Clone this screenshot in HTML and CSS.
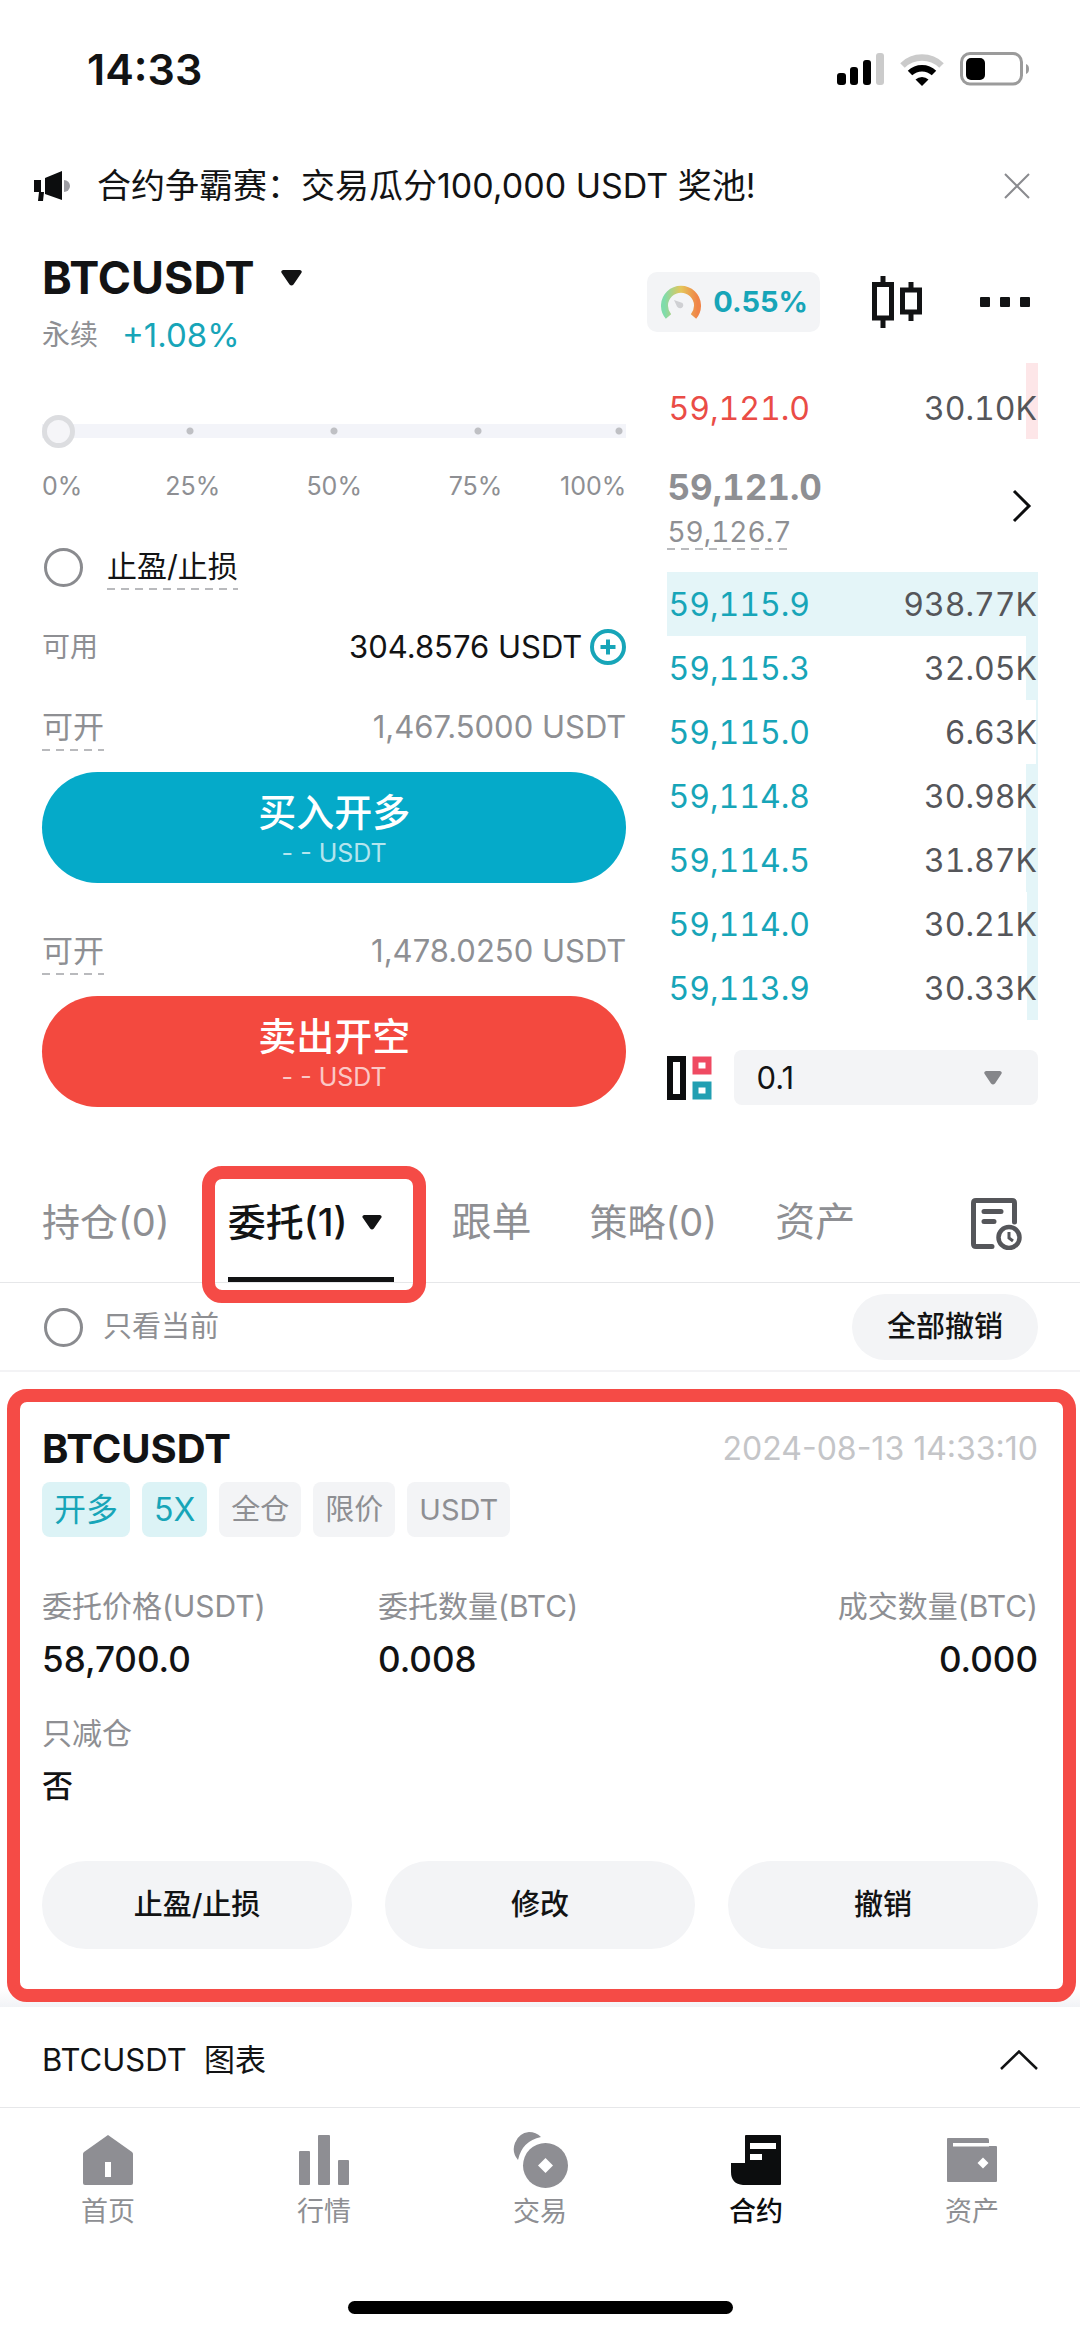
FILE: index.html
```html
<!DOCTYPE html>
<html lang="zh-CN">
<head>
<meta charset="utf-8">
<meta name="viewport" content="width=device-width, initial-scale=1">
<title>BTCUSDT 永续合约</title>
<link rel="stylesheet" href="styles.css">
</head>
<body>
<div class="status">
  <span class="status-time">14:33</span>
  <div class="status-icons">
    <svg width="47" height="32" viewBox="0 0 47 32"><rect x="0" y="20" width="9" height="12" rx="3"/><rect x="13" y="14" width="8" height="18" rx="3"/><rect x="26" y="7" width="8" height="25" rx="3"/><rect x="39" y="0" width="8" height="32" rx="3" fill="#cbcbcb"/></svg>
    <svg width="44" height="33" viewBox="0 0 44 33" fill="none"><path d="M2.500 12.500A28 28 0 0 1 41.500 12.500" stroke="#cbcbcb" stroke-width="6.500"/><path d="M10 20A17.500 17.500 0 0 1 34 20" stroke="#000" stroke-width="6.500"/><path d="M22 33l-6.500-6.500a9.500 9.500 0 0 1 13 0z" fill="#000"/></svg>
    <svg width="70" height="34" viewBox="0 0 70 34"><rect x="1.500" y="1.500" width="60" height="30.500" rx="8.500" fill="none" stroke="#9b9b9b" stroke-width="3"/><rect x="6" y="6" width="19" height="22" rx="5"/><path d="M66 12c4 1 4 9 0 10z" fill="#9b9b9b"/></svg>
  </div>
</div>

<div class="notice">
  <svg width="37" height="30" viewBox="0 0 37 30"><path d="M30 9a6 6 0 0 1 0 12z" fill="#9c9ca2"/><path d="M0 9h7v12H0zM11 7L28 0v29L11 23zM5 21h5l-1 9H4z" fill="#0c0d0e"/></svg>
  <span class="notice-text">合约争霸赛：交易瓜分100,000 USDT 奖池!</span>
  <button class="icon-button" aria-label="关闭"><svg width="26" height="26" viewBox="0 0 26 26"><path d="M1 1l24 24M25 1L1 25" stroke="#8a8b8f" stroke-width="2"/></svg></button>
</div>

<header class="pair">
  <div class="pair-info">
    <button class="pair-name">BTCUSDT<svg width="21" height="16" viewBox="0 0 21 16"><path d="M2 0h17q3 1 1 3.500L12.500 14.500q-2 2-4 0L1 3.500Q-1 1 2 0z" fill="#121314"/></svg></button>
    <div class="pair-sub"><span class="pair-kind">永续</span><span class="pair-change">+1.08%</span></div>
  </div>
  <div class="pair-tools">
    <button class="gauge">
      <svg width="40" height="34" viewBox="0 0 40 34" fill="none"><defs><linearGradient id="g" x1="0" x2="1" y1="0" y2="0"><stop offset="0" stop-color="#7fdcab"/><stop offset=".5" stop-color="#e5c65a"/><stop offset="1" stop-color="#f08448"/></linearGradient></defs><path d="M7.500 31.500A16.500 16.500 0 1 1 32.500 31.500" stroke="url(#g)" stroke-width="7"/><path d="M13 15l8.500 3q2 3-1 5-3 1-4.500-1.500z" fill="#cfd0d3"/></svg>
      0.55%
    </button>
    <button class="icon-button" aria-label="K线"><svg width="50" height="52" viewBox="0 0 50 52" fill="none" stroke="#121314" stroke-width="5"><path d="M2.500 8.500h17v33.500h-17zM11 0v8M11 42v10M30.500 14h17v22h-17zM39 6v8M39 36v9"/></svg></button>
    <button class="icon-button" aria-label="更多"><svg width="50" height="10" viewBox="0 0 50 10" fill="#121314"><rect width="10" height="10" rx="1"/><rect x="20" width="10" height="10" rx="1"/><rect x="40" width="10" height="10" rx="1"/></svg></button>
  </div>
</header>

<main class="trade">
  <form class="order-form">
    <input class="slider" type="range" min="0" max="100" value="0" aria-label="仓位比例">
    <div class="slider-labels"><span>0%</span><span>25%</span><span>50%</span><span>75%</span><span>100%</span></div>
    <label class="check"><input class="ring" type="checkbox"><span class="hint">止盈/止损</span></label>
    <div class="amount amount-free"><span class="amount-label">可用</span><span class="amount-value">304.8576 USDT
      <svg width="36" height="36" viewBox="0 0 36 36" fill="none" stroke="#17a5b8"><circle cx="18" cy="18" r="16" stroke-width="4"/><path d="M18 10.500v15M10.500 18h15" stroke-width="4"/></svg></span></div>
    <div class="amount muted"><span class="hint">可开</span><span>1,467.5000 USDT</span></div>
    <button class="big buy" type="button"><b>买入开多</b><small>- - USDT</small></button>
    <div class="amount muted"><span class="hint">可开</span><span>1,478.0250 USDT</span></div>
    <button class="big sell" type="button"><b>卖出开空</b><small>- - USDT</small></button>
  </form>

  <section class="book">
    <table class="levels asks">
      <tr style="--depth:3.3%"><td>59,121.0</td><td>30.10K</td></tr>
    </table>
    <div class="mid">
      <div>
        <div class="last">59,121.0</div>
        <span class="mark hint">59,126.7</span>
      </div>
      <button class="icon-button" aria-label="详情"><svg width="20" height="34" viewBox="0 0 20 34"><path d="M2 2l15 15L2 32" fill="none" stroke="#0c0d0e" stroke-width="3"/></svg></button>
    </div>
    <table class="levels bids">
      <tr style="--depth:100%"><td>59,115.9</td><td>938.77K</td></tr>
      <tr style="--depth:3.4%"><td>59,115.3</td><td>32.05K</td></tr>
      <tr style="--depth:0.7%"><td>59,115.0</td><td>6.63K</td></tr>
      <tr style="--depth:3.3%"><td>59,114.8</td><td>30.98K</td></tr>
      <tr style="--depth:3.4%"><td>59,114.5</td><td>31.87K</td></tr>
      <tr style="--depth:3.2%"><td>59,114.0</td><td>30.21K</td></tr>
      <tr style="--depth:3.2%"><td>59,113.9</td><td>30.33K</td></tr>
    </table>
    <div class="book-tools">
      <button class="icon-button" aria-label="盘口样式"><svg width="45" height="44" viewBox="0 0 45 44" fill="none"><path d="M3 3h13v38H3z" stroke="#0c0d0e" stroke-width="6"/><path d="M28.500 3.500h13v12h-13z" stroke="#ef4a62" stroke-width="6"/><path d="M28.500 28.500h13v12h-13z" stroke="#229fb2" stroke-width="6"/></svg></button>
      <label class="step">
        <select aria-label="价格精度"><option>0.1</option></select>
        <svg width="18" height="14" viewBox="0 0 18 14"><path d="M2 0h14q3 1 1 3.500L11 12.500q-2 2-4 0L1 3.500Q-1 1 2 0z" fill="#85868a"/></svg>
      </label>
    </div>
  </section>
</main>

<nav class="tabs">
  <button class="tab">持仓(0)</button>
  <button class="tab active">委托(1)<svg width="20" height="15" viewBox="0 0 21 16"><path d="M2 0h17q3 1 1 3.500L12.500 14.500q-2 2-4 0L1 3.500Q-1 1 2 0z" fill="#121314"/></svg></button>
  <button class="tab plain">跟单</button>
  <button class="tab">策略(0)</button>
  <button class="tab plain">资产</button>
  <button class="icon-button history" aria-label="历史委托"><svg width="51" height="52" viewBox="0 0 51 52" fill="none" stroke="#55565a" stroke-width="5"><path d="M43.500 24V5q0-2.500-2.500-2.500H5Q2.500 2.500 2.500 5v41q0 2.500 2.500 2.500h16" stroke-linecap="round"/><path d="M13 13.500h17M13 23.500h10" stroke-linecap="round"/><circle cx="38" cy="39.500" r="10.500" stroke-width="4.500"/><path d="M38 34v6l4 3" stroke-width="3"/></svg></button>
</nav>

<div class="filter">
  <label class="check muted"><input class="ring" type="checkbox">只看当前</label>
  <button class="pill">全部撤销</button>
</div>

<article class="order">
  <div class="order-head"><h2>BTCUSDT</h2><time>2024-08-13 14:33:10</time></div>
  <div class="tags"><span class="tag long">开多</span><span class="tag long">5X</span><span class="tag">全仓</span><span class="tag">限价</span><span class="tag">USDT</span></div>
  <dl class="facts">
    <div><dt>委托价格(USDT)</dt><dd>58,700.0</dd></div>
    <div><dt>委托数量(BTC)</dt><dd>0.008</dd></div>
    <div class="end"><dt>成交数量(BTC)</dt><dd>0.000</dd></div>
    <div><dt>只减仓</dt><dd class="word">否</dd></div>
  </dl>
  <div class="actions"><button class="pill">止盈/止损</button><button class="pill">修改</button><button class="pill">撤销</button></div>
</article>

<button class="chart-bar"><span>BTCUSDT&nbsp; 图表</span><svg width="38" height="20" viewBox="0 0 38 20"><path d="M1 19L19 1.500 37 19" fill="none" stroke="#121314" stroke-width="2.500"/></svg></button>

<nav class="bottom">
  <a href="#"><svg viewBox="0 0 50 50"><path d="M25 0L49 17q1 1 1 2v29q0 2-2 2H2q-2 0-2-2V19q0-1 1-2z"/><path d="M22 27h6v15h-6z" fill="#fff"/></svg>首页</a>
  <a href="#"><svg viewBox="0 0 50 50"><rect y="16" width="11" height="34" rx="1"/><rect x="19" width="12" height="50" rx="1"/><rect x="39" y="25" width="11" height="25" rx="1"/></svg>行情</a>
  <a href="#"><svg class="wide" viewBox="0 0 56 56"><path d="M17 0A17 17 0 0 1 29 5Q10 9 6 28A17 17 0 0 1 17 0z"/><circle cx="33.500" cy="33.500" r="22.500"/><path d="M33.500 26l7.500 7.500-7.500 7.500-7.500-7.500z" fill="#fff"/></svg>交易</a>
  <a href="#" class="current"><svg viewBox="0 0 50 50"><path d="M15 0h34q1 0 1 1v48q0 1-1 1H12Q0 49 0 37V28h14V1q0-1 1-1z"/><path d="M19 8h26v6H19zM19 19h12v6H19z" fill="#fff"/></svg>合约</a>
  <a href="#"><svg viewBox="0 0 50 50"><path d="M1 3h39q2 0 2 2v3q0 1-2 1H6v2h43q1 0 1 1v34q0 1-1 1H1q-1 0-1-1V4q0-1 1-1z"/><path d="M6 8h36v3.500H6z" fill="#fff"/><path d="M36 22.500l5.500 5.500-5.500 5.500-5.500-5.500z" fill="#fff"/></svg>资产</a>
</nav>
<div class="home-bar"></div>
</body>
</html>
```

FILE: styles.css
```css
* { box-sizing: border-box; }

:root {
  --ink: #121314;
  --muted: #8e8f93;
  --cyan: #17a5b8;
  --red: #f54b46;
  --fill: #f3f4f6;
  --side: 42px;
}

body {
  margin: 0;
  background: #fff;
  color: var(--ink);
  font-family: Inter, "Noto Sans CJK SC", sans-serif;
  font-size: 30px;
  line-height: 44px;
}

button, select {
  margin: 0;
  padding: 0;
  border: 0;
  background: none;
  color: inherit;
  font: inherit;
}

svg { display: block; flex: none; }
.icon-button { display: block; }
.muted { color: var(--muted); }

/* status bar */
.status {
  display: flex;
  align-items: center;
  justify-content: space-between;
  padding: 48px 50px 48px 87px;
  line-height: 42px;
}
.status-time { font-size: 43px; font-weight: 600; }
.status-icons { display: flex; align-items: center; gap: 16px; }

/* announcement */
.notice {
  display: flex;
  align-items: center;
  padding: 26px 50px 26px 34px;
  gap: 26px;
}
.notice-text { flex: 1; font-size: 34px; }

/* pair header */
.pair {
  display: flex;
  align-items: center;
  justify-content: space-between;
  padding: 20px 50px 0 var(--side);
}
.pair-name {
  display: flex;
  align-items: center;
  gap: 26px;
  font-size: 45px;
  line-height: 48px;
  font-weight: 700;
}
.pair-sub {
  display: flex;
  align-items: center;
  gap: 24px;
  margin-top: 15px;
  line-height: 36px;
}
.pair-kind { color: var(--muted); font-size: 28px; }
.pair-change { color: var(--cyan); font-size: 33px; }
.pair-tools { display: flex; align-items: center; margin-bottom: 3px; }
.gauge {
  display: flex;
  align-items: center;
  gap: 12px;
  height: 60px;
  margin-right: 52px;
  padding: 0 12px 0 14px;
  border-radius: 10px;
  background: var(--fill);
  color: var(--cyan);
  font-size: 29px;
  font-weight: 700;
}
.pair-tools .icon-button + .icon-button { margin-left: 58px; }

/* trade area */
.trade {
  display: grid;
  grid-template-columns: minmax(0, 585fr) minmax(0, 371fr);
  gap: 41px;
  padding: 0 var(--side);
}
.order-form { display: flex; flex-direction: column; }

.slider {
  appearance: none;
  width: 100%;
  height: 34px;
  margin: 61px 0 0;
  --dot: radial-gradient(circle, #bfc0c4 0 3px, transparent 4px);
  background:
    var(--dot) 25% 50% / 8px 8px no-repeat,
    var(--dot) 50% 50% / 8px 8px no-repeat,
    var(--dot) 75% 50% / 8px 8px no-repeat,
    var(--dot) calc(100% - 3px) 50% / 8px 8px no-repeat,
    linear-gradient(#f3f4f9, #f3f4f9) 50% 50% / 100% 14px no-repeat;
}
.slider::-webkit-slider-thumb {
  appearance: none;
  width: 33px;
  height: 33px;
  border: 5px solid #dcdde0;
  border-radius: 50%;
  background: #f5f5f8;
}
.slider-labels {
  display: grid;
  grid-template-columns: 80fr 141fr 141fr 141fr 80fr;
  margin-top: 23px;
  color: var(--muted);
  font-size: 25px;
  line-height: 30px;
  text-align: center;
}
.slider-labels :first-child { text-align: left; }
.slider-labels :last-child { text-align: right; }

.check { display: flex; align-items: center; gap: 24px; }
.order-form .check { margin-top: 43px; }
.ring {
  appearance: none;
  width: 39px;
  height: 39px;
  margin: 0 0 0 2px;
  border: 3px solid #8a8b8f;
  border-radius: 50%;
}
.hint {
  padding-bottom: 2px;
  background: repeating-linear-gradient(90deg, #b9babd 0 8px, transparent 8px 14px) 0 100% / 100% 2px no-repeat;
}

.amount { display: flex; justify-content: space-between; margin-top: 46px; font-size: 31px; }
.amount-free { margin: 35px 0 -10px; }
.amount-label { color: var(--muted); font-size: 28px; }
.amount-value { display: flex; align-items: center; gap: 8px; }

.big {
  display: flex;
  flex-direction: column;
  align-items: center;
  justify-content: center;
  height: 111px;
  margin-top: 21px;
  padding-top: 6px;
  border-radius: 56px;
  color: #fff;
}
.big b { font-size: 38px; font-weight: 500; line-height: 44px; }
.big small { font-size: 25px; line-height: 38px; opacity: .7; }
.buy { background: #05aac9; }
.sell { background: #f3493f; }

/* order book */
.levels {
  width: 100%;
  border-collapse: collapse;
  font-size: 32px;
  font-feature-settings: "tnum";
}
.levels tr {
  height: 64px;
  background: linear-gradient(to left, var(--bar) var(--depth), transparent var(--depth));
}
.levels td { padding: 2px 1px 0; }
.levels td:last-child { color: #55565a; text-align: right; }
.asks { --bar: #fde6e8; margin-top: 10px; color: #ea4c46; }
.asks tr { height: 76px; }
.levels.asks td { padding-top: 16px; }
.bids { --bar: #e4f5f8; color: var(--cyan); }
.mid {
  display: flex;
  align-items: center;
  justify-content: space-between;
  padding: 30px 6px 22px 0;
  color: var(--muted);
  font-feature-settings: "tnum";
}
.mid .icon-button { margin-bottom: 7px; }
.last { margin-bottom: 11px; font-size: 35px; font-weight: 700; line-height: 36px; }
.mark { display: block; width: max-content; font-size: 28px; line-height: 32px; }
.book-tools { display: flex; align-items: center; gap: 22px; margin-top: 30px; }
.step {
  display: flex;
  flex: 1;
  align-items: center;
  height: 55px;
  padding: 0 36px 0 22px;
  border-radius: 8px;
  background: var(--fill);
}
.step select { flex: 1; appearance: none; font-size: 31px; }

/* tabs */
.tabs {
  display: flex;
  align-items: flex-start;
  gap: 58px;
  padding: 91px 58px 0 var(--side);
  border-bottom: 1px solid #e6e7e9;
  color: var(--muted);
}
.tab {
  padding-bottom: 31px;
  border-bottom: 5px solid transparent;
  font-size: 38px;
  line-height: 48px;
}
.tab.plain { font-size: 40px; }
.tab.active {
  position: relative;
  display: flex;
  align-items: center;
  gap: 14px;
  padding-right: 12px;
  border-bottom-color: var(--ink);
  color: var(--ink);
  font-weight: 500;
}
.tab.active::after {
  content: "";
  position: absolute;
  inset: -32px -32px -26px -26px;
  border: 13px solid var(--red);
  border-radius: 20px;
}
.history { margin-left: auto; }

/* filter row */
.filter {
  display: flex;
  align-items: center;
  justify-content: space-between;
  padding: 11px var(--side) 10px;
  border-bottom: 2px solid #f3f3f5;
  font-size: 29px;
}
.filter .check { gap: 20px; }
.pill {
  height: 88px;
  border-radius: 44px;
  background: var(--fill);
  font-size: 29px;
  font-weight: 500;
}
.filter .pill { height: 66px; padding: 0 35px; }

/* order card */
.order {
  position: relative;
  padding: 57px var(--side) 58px;
  background: linear-gradient(#fff 97%, #f2f3f6);
}
.order::after {
  content: "";
  position: absolute;
  inset: 17px 4px 5px 7px;
  border: 13px solid var(--red);
  border-radius: 20px;
  pointer-events: none;
}
.order-head { display: flex; align-items: center; justify-content: space-between; line-height: 40px; }
.order-head h2 { margin: 0; font-size: 40px; font-weight: 700; }
.order-head time { color: #c4c5c8; font-size: 32px; }
.tags { display: flex; gap: 12px; margin-top: 13px; }
.tag {
  padding: 0 12px;
  border-radius: 8px;
  background: var(--fill);
  color: var(--muted);
  font-size: 29px;
  line-height: 55px;
}
.tag.long { background: #dcf3f6; color: var(--cyan); font-size: 32px; }
.facts {
  display: grid;
  grid-template-columns: repeat(3, 1fr);
  gap: 38px 12px;
  margin: 51px 0 57px;
  line-height: 36px;
}
.facts dt { color: var(--muted); font-size: 30px; }
.facts dd { margin: 17px 0 0; font-size: 35px; font-weight: 500; }
.facts .word { font-size: 31px; }
.facts .end { text-align: right; }
.actions { display: grid; grid-template-columns: repeat(3, 1fr); gap: 33px; }

/* chart drawer */
.chart-bar {
  display: flex;
  align-items: center;
  justify-content: space-between;
  width: 100%;
  padding: 32px var(--side) 26px;
  border-bottom: 1px solid #e6e7e9;
  font-size: 31px;
  line-height: 42px;
}

/* bottom navigation */
.bottom { display: grid; grid-template-columns: repeat(5, 1fr); padding-top: 27px; }
.bottom a {
  display: flex;
  flex-direction: column;
  align-items: center;
  gap: 11px;
  color: var(--muted);
  font-size: 27px;
  line-height: 32px;
  text-decoration: none;
}
.bottom svg { width: 50px; height: 50px; fill: #8e8e93; }
.bottom .wide { width: 56px; height: 56px; margin: -3px 0; }
.bottom .current { color: #0c0d0e; font-weight: 500; }
.bottom .current svg { fill: #0c0d0e; }
.home-bar {
  width: 385px;
  height: 13px;
  margin: 73px auto 23px;
  border-radius: 7px;
  background: #000;
}
```
